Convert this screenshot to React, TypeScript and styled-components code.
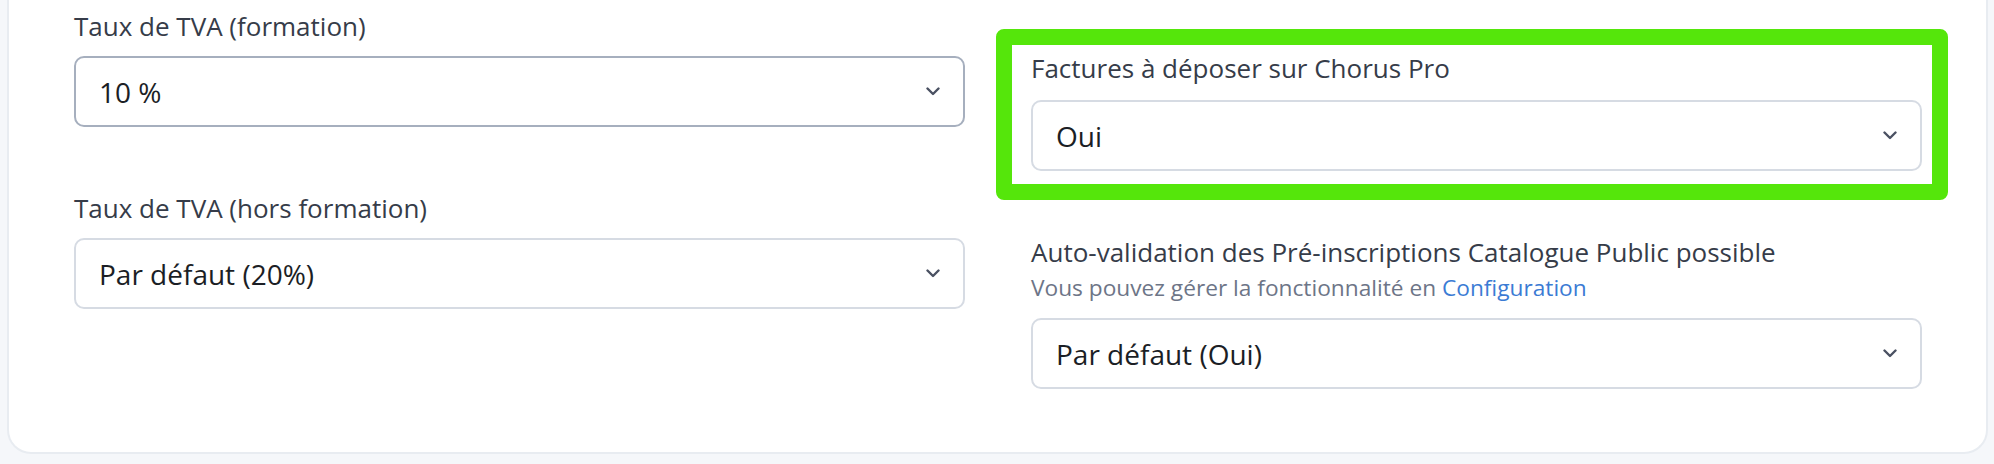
import React from "react";
import styled, { createGlobalStyle } from "styled-components";

const GlobalStyle = createGlobalStyle`
  html, body { margin: 0; padding: 0; background: #f5f7fa; }
  body { font-family: "Open Sans", "Noto Sans", sans-serif; }
`;

const Page = styled.div`
  width: 1994px;
  height: 464px;
  box-sizing: border-box;
  padding: 0 6px 10px 7px;
  overflow: hidden;
  background: #f5f7fa;
`;

const Card = styled.section`
  box-sizing: border-box;
  height: 454px;
  background: #ffffff;
  border: 2px solid #e8ecf1;
  border-top: none;
  border-radius: 0 0 24px 24px;
  padding: 8px 64px 0 65px;
  display: grid;
  grid-template-columns: 891px 891px;
  column-gap: 66px;
  align-items: start;
`;

const Column = styled.div<{ $offset?: number }>`
  display: flex;
  flex-direction: column;
  gap: 63px;
  padding-top: ${(p) => p.$offset ?? 0}px;
`;

const Field = styled.div`
  position: relative;
  display: flex;
  flex-direction: column;
`;

const Highlight = styled.div`
  position: absolute;
  left: -35px;
  right: -26px;
  top: -21px;
  bottom: -29px;
  border: 16px solid #55e60b;
  border-radius: 8px;
  pointer-events: none;
`;

const Label = styled.label<{ $gap?: number }>`
  font-size: 26px;
  line-height: 36px;
  color: #363c49;
  margin-bottom: ${(p) => p.$gap ?? 12}px;
`;

const Hint = styled.p`
  margin: -9px 0 15px 0;
  font-size: 22.7px;
  line-height: 30px;
  color: #6d7587;

  a {
    color: #3b7bd4;
    text-decoration: none;
  }
`;

const SelectBox = styled.div<{ $active?: boolean }>`
  box-sizing: border-box;
  height: 71px;
  display: flex;
  align-items: center;
  justify-content: space-between;
  padding: 0 23px 0 23px;
  border: 2px solid ${(p) => (p.$active ? "#a6afbe" : "#d6dbe3")};
  border-radius: 10px;
  background: #ffffff;
  font-size: 28px;
  color: #1b1e25;
`;

const Chevron = () => (
  <svg width="14" height="9" viewBox="0 0 14 9" fill="none">
    <path d="M1.5 1.5 L7 7 L12.5 1.5" stroke="#4a5162" strokeWidth="2.4" strokeLinecap="round" strokeLinejoin="round" />
  </svg>
);

type SelectProps = { value: string; active?: boolean };

const Select = ({ value, active }: SelectProps) => (
  <SelectBox $active={active}>
    <span>{value}</span>
    <Chevron />
  </SelectBox>
);

export default function App() {
  return (
    <>
      <GlobalStyle />
      <Page>
        <Card>
          <Column>
            <Field>
              <Label>Taux de TVA (formation)</Label>
              <Select value="10 %" active />
            </Field>
            <Field>
              <Label>Taux de TVA (hors formation)</Label>
              <Select value="Par défaut (20%)" />
            </Field>
          </Column>
          <Column $offset={42}>
            <Field>
              <Label $gap={14}>Factures à déposer sur Chorus Pro</Label>
              <Select value="Oui" />
              <Highlight />
            </Field>
            <Field>
              <Label>Auto-validation des Pré-inscriptions Catalogue Public possible</Label>
              <Hint>
                Vous pouvez gérer la fonctionnalité en <a href="#">Configuration</a>
              </Hint>
              <Select value="Par défaut (Oui)" />
            </Field>
          </Column>
        </Card>
      </Page>
    </>
  );
}
